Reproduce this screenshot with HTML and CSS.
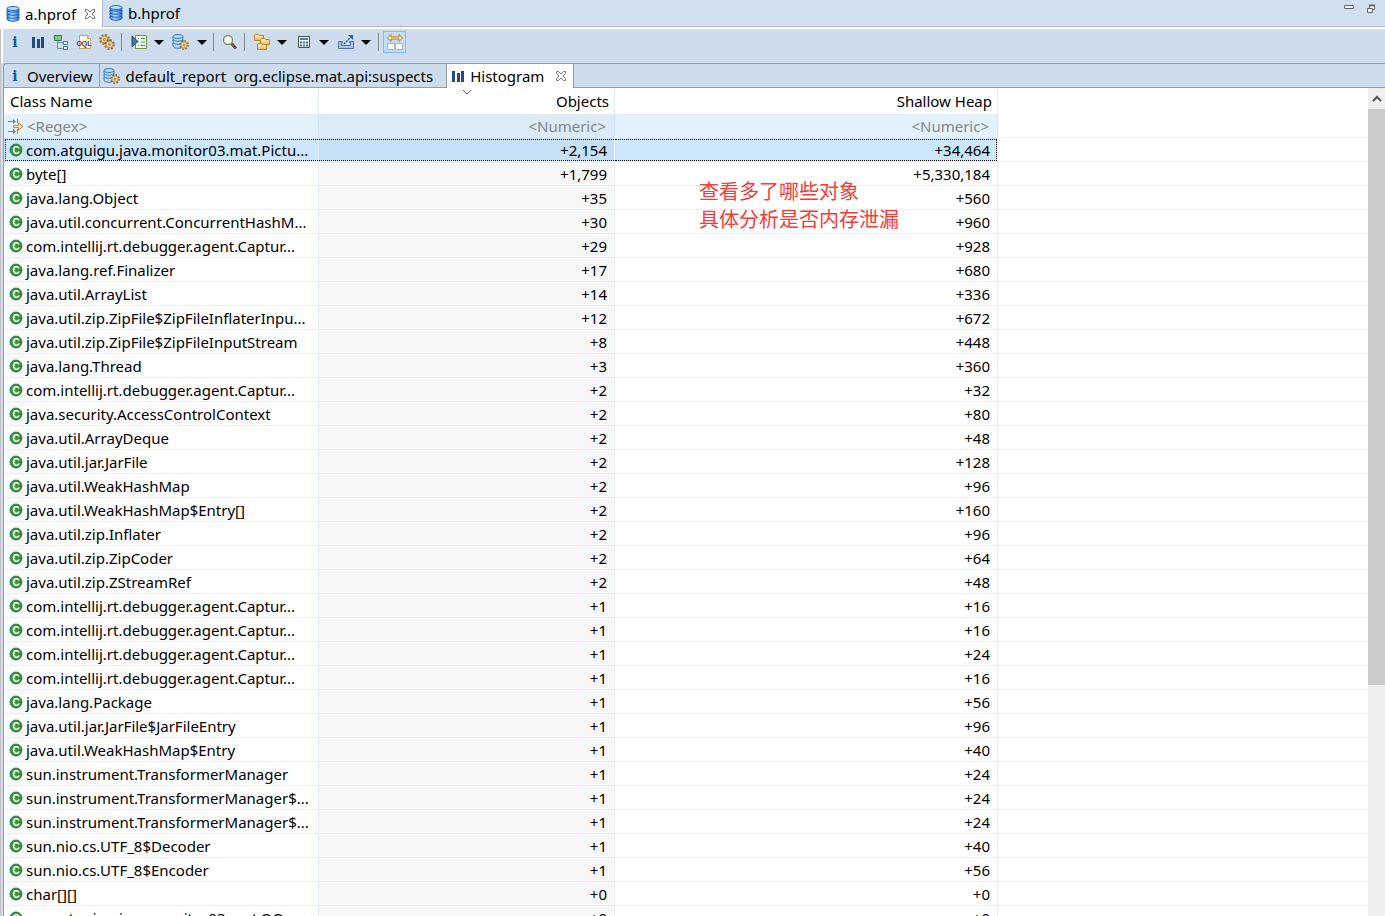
FILE: index.html
```html
<!DOCTYPE html>
<html lang="en">
<head>
<meta charset="utf-8">
<title>Memory Analyzer - Histogram</title>
<link rel="stylesheet" href="styles.css">
<script src="rows.js" defer></script>
</head>
<body>
<svg class="defs" aria-hidden="true">
  <defs>
    <linearGradient id="blue" x1="0" x2="1"><stop offset="0" stop-color="#3585d8"/><stop offset=".4" stop-color="#b4defc"/><stop offset="1" stop-color="#1f6fc8"/></linearGradient>
    <linearGradient id="gold" x1="0" x2="0" y1="0" y2="1"><stop offset="0" stop-color="#fff7cf"/><stop offset="1" stop-color="#e9b650"/></linearGradient>
    <symbol id="db" viewBox="0 0 16 16">
      <g fill="url(#blue)" stroke="#1f63bb"><path d="M2 11v2c0 3 12 3 12 0v-2z"/><path d="M2 8v2c0 3 12 3 12 0V8z"/><path d="M2 5v2c0 3 12 3 12 0V5z"/><path d="M2 3v1c0 3 12 3 12 0V3z"/><ellipse cx="8" cy="2.500" rx="6" ry="2" fill="#b9e1ff"/></g>
    </symbol>
    <symbol id="gear" viewBox="0 0 10 10"><circle cx="5" cy="5" r="4.200" fill="none" stroke="#94682f" stroke-width="1.500" stroke-dasharray="1.700 1.600"/><circle cx="5" cy="5" r="3.200" fill="#f5d994" stroke="#a8793a" stroke-width=".8"/><circle cx="5" cy="5" r="1" fill="#fff" stroke="#85561c" stroke-width=".7"/></symbol>
    <symbol id="dbgear" viewBox="0 0 18 16">
      <g fill="#b8ddf5" stroke="#3478b9"><path d="M1 9v3c0 3 10 3 10 0V9z"/><path d="M1 6v2c0 3 10 3 10 0V6z"/><path d="M1 3v2c0 3 10 3 10 0V3z"/><ellipse cx="6" cy="2.500" rx="5" ry="2"/></g><use href="#gear" x="7" y="6" width="10" height="10"/>
    </symbol>
    <symbol id="info" viewBox="0 0 16 16"><text class="info-letter" x="8" y="13" text-anchor="middle">i</text></symbol>
    <symbol id="bars" viewBox="0 0 16 16"><path fill="#244a7d" d="M2 3h3v11H2zM7 5h3v9H7zM11 3h3v11h-3z"/></symbol>
    <symbol id="close" viewBox="0 0 12 12"><path d="M1.500 1.500h2L6 4l2.500-2.500h2v2L8 6l2.500 2.500v2h-2L6 8l-2.500 2.500h-2v-2L4 6 1.500 3.500z" fill="#fff" stroke="#777"/></symbol>
    <symbol id="class" viewBox="0 0 14 14"><circle cx="7" cy="7" r="6" fill="#34943f" stroke="#287a45"/><text class="class-letter" x="7" y="10.500" text-anchor="middle">C</text></symbol>
    <symbol id="filter" viewBox="0 0 16 16"><path d="M0 3.500h5M0 13.500h5M9.500 1v4M9.500 11v5" stroke="#72828e" fill="none"/><path d="M5 1l3 2.500L5 6zM5 11l3 2.500L5 16z" fill="#72828e"/><path d="M5.500 7.500h5V5l4.500 3.500-4.500 3.500V9.500h-5z" fill="#ffe9a4" stroke="#c28a2b"/></symbol>
  </defs>
</svg>

<nav class="editor-tabs" aria-label="Open heap dumps">
  <button class="editor-tab active"><svg class="icon"><use href="#db"/></svg>a.hprof<svg class="close"><use href="#close"/></svg></button>
  <button class="editor-tab"><svg class="icon"><use href="#db"/></svg>b.hprof</button>
  <div class="window-tools">
    <button aria-label="Minimize"><svg width="10" height="12"><path d="M.5 5.500h9v3h-9z" fill="#fff" stroke="#666"/></svg></button>
    <button aria-label="Restore"><svg width="8" height="14"><path d="M2.500 5.500h5v4h-5z" fill="#fff" stroke="#666"/><path d="M2 5.500h6" stroke="#666" stroke-width="2"/><path d="M.5 8.500h5v4h-5z" fill="#fff" stroke="#666"/></svg></button>
  </div>
</nav>

<div class="editor">
  <div class="toolbar" role="toolbar" aria-label="Heap dump tools">
    <button aria-label="Overview"><svg class="icon"><use href="#info"/></svg></button>
    <button aria-label="Histogram"><svg class="icon"><use href="#bars"/></svg></button>
    <button aria-label="Dominator tree"><svg class="icon" viewBox="0 0 16 16"><path d="M4.500 6v8.500H10M4.500 8.500H10" fill="none" stroke="#728da7"/><path d="M1.500 1.500h7v5h-7z" fill="#86c88b" stroke="#347e47"/><path d="M10.500 7.500h4v3h-4zM10.500 12.500h4v3h-4z" fill="#e8f5ff" stroke="#3c739d"/></svg></button>
    <button aria-label="Object query language"><svg class="icon" viewBox="0 0 16 16"><path d="M3.500 1.500h8l3 3v10h-11z" fill="#fff8dc" stroke="#b9a779"/><path d="M11.500 1.500v3h3" fill="#e7c877" stroke="#b9a779"/><text class="oql-letters" x="8" y="12" text-anchor="middle">OQL</text></svg></button>
    <button aria-label="Thread overview"><svg class="icon" viewBox="0 0 16 16"><use href="#gear" x="0" y="0" width="11" height="11"/><use href="#gear" x="5" y="5" width="11" height="11"/></svg></button>
    <span class="separator"></span>
    <button class="menu" aria-label="Run expert system test"><svg class="icon" viewBox="0 0 16 16"><path d="M4.500 1.500h11v13h-11z" fill="#f5fbe8" stroke="#7d8e53"/><path d="M7 4.500h1M10 4.500h4M7 8h1M10 8h4M7 11.500h1M10 11.500h4" stroke="#3a985a"/><path d="M1 2v11l6-5.500z" fill="#3d799c" stroke="#274c70"/></svg><i class="arrow"></i></button>
    <button class="menu" aria-label="Query browser"><svg class="icon wide"><use href="#dbgear"/></svg><i class="arrow"></i></button>
    <span class="separator"></span>
    <button aria-label="Find object"><svg class="icon" viewBox="0 0 16 16"><path d="M9.500 9.500l4.500 5" stroke="#774945" stroke-width="3"/><circle cx="6" cy="6" r="4.500" fill="#f8fbe9" stroke="#8b8c7c" stroke-width="1.500"/></svg></button>
    <span class="separator"></span>
    <button class="menu" aria-label="Group result"><svg class="icon" viewBox="0 0 16 16"><g fill="url(#gold)" stroke="#b8832b"><path d="M.5 1.500l1-1h3l1 1h4v5h-9z"/><path d="M6.500 5.500l1-1h3l1 1h4v5h-9z"/><path d="M3.500 10.500l1-1h3l1 1h4v5h-9z"/></g></svg><i class="arrow"></i></button>
    <button class="menu" aria-label="Calculate retained size"><svg class="icon" viewBox="0 0 16 16"><path d="M2.500 2.500h11v11h-11z" fill="#eaf5fa" stroke="#554f40"/><path d="M4 4h8v2H4z" fill="#4789b4"/><path d="M4 8.500h8M4 11.500h8" stroke="#417599" stroke-width="2" stroke-dasharray="2 1"/></svg><i class="arrow"></i></button>
    <button class="menu" aria-label="Export"><svg class="icon" viewBox="0 0 16 16"><path d="M.5 7.500h4v1h-1v3h9v-3h-1v-1h4v7H.5z" fill="#adc5e9" stroke="#526fa9"/><path d="M6 10l7-7" stroke="#28679c" stroke-width="1.500" stroke-dasharray="2 1"/><path d="M10 1h5v5z" fill="#28679c"/></svg><i class="arrow"></i></button>
    <span class="separator"></span>
    <button class="pressed" aria-label="Compare to another heap dump" aria-pressed="true"><svg class="icon" viewBox="0 0 16 16"><path d="M.5 4L4 .5v2.500h8V.5L15.500 4 12 7.500V5H4v2.500z" fill="#fff1b2" stroke="#bd7819"/><path d="M.5 9.500h7v6h-7zM8.500 9.500h7v6h-7z" fill="#f6fcff" stroke="#b3ba9a"/></svg></button>
  </div>

  <nav class="view-tabs" aria-label="Views">
    <button class="view-tab"><svg class="icon"><use href="#info"/></svg>Overview</button>
    <button class="view-tab report"><svg class="icon wide"><use href="#dbgear"/></svg>default_report&nbsp; org.eclipse.mat.api:suspects</button>
    <button class="view-tab active"><svg class="icon"><use href="#bars"/></svg>Histogram<svg class="close"><use href="#close"/></svg></button>
  </nav>

  <main class="histogram">
    <div class="grid">
      <table>
        <colgroup><col class="col-name"><col class="col-objects"><col class="col-heap"><col></colgroup>
        <thead>
          <tr><th scope="col">Class Name</th><th scope="col" class="num sorted" aria-sort="descending">Objects<svg class="sort" viewBox="0 0 10 6"><path d="M1 1l4 4 4-4" fill="none" stroke="#666"/></svg></th><th scope="col" class="num">Shallow Heap</th><td class="rest"></td></tr>
          <tr class="filters">
            <td><label class="cell"><svg class="icon"><use href="#filter"/></svg><input type="text" placeholder="&lt;Regex&gt;" aria-label="Class name filter"></label></td>
            <td><input type="text" placeholder="&lt;Numeric&gt;" aria-label="Objects filter"></td>
            <td><input type="text" placeholder="&lt;Numeric&gt;" aria-label="Shallow heap filter"></td>
            <td class="rest"></td>
          </tr>
        </thead>
        <tbody id="rows"></tbody>
      </table>
      <p class="note" lang="zh">查看多了哪些对象<br>具体分析是否内存泄漏</p>
    </div>
    <div class="scrollbar"><button aria-label="Scroll up"><svg width="10" height="7"><path d="M1 6l4-4 4 4" fill="none" stroke="#555" stroke-width="2"/></svg></button><div class="thumb"></div></div>
  </main>
</div>
</body>
</html>
```
FILE: rows.js
```js
const agent = "com.intellij.rt.debugger.agent.Captur...";
const rows = [
  ["com.atguigu.java.monitor03.mat.Pictu...", "+2,154", "+34,464"],
  ["byte[]", "+1,799", "+5,330,184"],
  ["java.lang.Object", "+35", "+560"],
  ["java.util.concurrent.ConcurrentHashM...", "+30", "+960"],
  [agent, "+29", "+928"],
  ["java.lang.ref.Finalizer", "+17", "+680"],
  ["java.util.ArrayList", "+14", "+336"],
  ["java.util.zip.ZipFile$ZipFileInflaterInpu...", "+12", "+672"],
  ["java.util.zip.ZipFile$ZipFileInputStream", "+8", "+448"],
  ["java.lang.Thread", "+3", "+360"],
  [agent, "+2", "+32"],
  ["java.security.AccessControlContext", "+2", "+80"],
  ["java.util.ArrayDeque", "+2", "+48"],
  ["java.util.jar.JarFile", "+2", "+128"],
  ["java.util.WeakHashMap", "+2", "+96"],
  ["java.util.WeakHashMap$Entry[]", "+2", "+160"],
  ["java.util.zip.Inflater", "+2", "+96"],
  ["java.util.zip.ZipCoder", "+2", "+64"],
  ["java.util.zip.ZStreamRef", "+2", "+48"],
  [agent, "+1", "+16"],
  [agent, "+1", "+16"],
  [agent, "+1", "+24"],
  [agent, "+1", "+16"],
  ["java.lang.Package", "+1", "+56"],
  ["java.util.jar.JarFile$JarFileEntry", "+1", "+96"],
  ["java.util.WeakHashMap$Entry", "+1", "+40"],
  ["sun.instrument.TransformerManager", "+1", "+24"],
  ["sun.instrument.TransformerManager$...", "+1", "+24"],
  ["sun.instrument.TransformerManager$...", "+1", "+24"],
  ["sun.nio.cs.UTF_8$Decoder", "+1", "+40"],
  ["sun.nio.cs.UTF_8$Encoder", "+1", "+56"],
  ["char[][]", "+0", "+0"],
  ["com.atguigu.java.monitor03.mat.QQ", "+0", "+0"]
];

document.getElementById("rows").innerHTML = rows.map(([name, objects, heap], i) => `
  <tr${i === 0 ? ' class="selected"' : ""}>
    <td><div class="cell"><svg class="class-icon"><use href="#class"/></svg><span>${name}</span></div></td>
    <td class="num">${objects}</td>
    <td class="num">${heap}</td>
    <td class="rest"></td>
  </tr>`).join("");
```
FILE: styles.css
```css
* { box-sizing: border-box; }

body {
  margin: 0;
  height: 100vh;
  overflow: hidden;
  display: flex;
  flex-direction: column;
  background: #cddded;
  color: #000;
  font: 15px/24px "Noto Sans", "Noto Sans CJK SC", sans-serif;
}

button {
  margin: 0;
  padding: 0;
  border: 0;
  background: none;
  color: inherit;
  font: inherit;
  white-space: nowrap;
}

.defs { position: absolute; width: 0; height: 0; }
.icon { width: 16px; height: 16px; flex: none; display: block; }
.wide { width: 18px; }
.close { width: 12px; height: 12px; flex: none; }
.info-letter { font: bold 14px "DejaVu Serif", serif; fill: #155a94; }
.class-letter { font: bold 10px "Liberation Sans", sans-serif; fill: #fff; }
.oql-letters { font: bold 7px "Liberation Sans", sans-serif; fill: #45406e; }

.editor-tabs {
  display: flex;
  flex: none;
  height: 27px;
  background: #d0e0ef;
  border-bottom: 1px solid #b4b7d0;
}
.editor-tab {
  display: flex;
  align-items: center;
  gap: 4px;
  padding: 0 6px 0 5px;
}
.editor-tab.active {
  background: #fff;
  border-right: 1px solid #b4b7d0;
  margin-bottom: -1px;
}
.editor-tab .close { margin-left: 4px; }
.window-tools {
  display: flex;
  align-items: flex-start;
  gap: 13px;
  margin-left: auto;
  padding-right: 10px;
}
.window-tools svg { display: block; }

.editor {
  flex: 1;
  min-height: 0;
  display: flex;
  flex-direction: column;
  margin-top: 2px;
  border-left: 1px solid #c4c4c4;
  box-shadow: 0 -2px #fff;
}

.toolbar {
  display: flex;
  align-items: center;
  flex: none;
  height: 34px;
  padding-bottom: 8px;
  border-left: 2px solid #fff;
}
.toolbar button {
  display: flex;
  align-items: center;
  justify-content: center;
  width: 23px;
  height: 22px;
}
.toolbar .menu { width: 42px; gap: 7px; }
.arrow {
  border: 5px solid transparent;
  border-top-color: #000;
  border-bottom: 0;
}
.separator { width: 1px; height: 18px; margin: 0 3px; background: #85898d; }
.toolbar .separator + button { margin-left: 1px; }
.toolbar .pressed { background: #c0def8; border: 1px solid #7dbdf2; }

.view-tabs {
  display: flex;
  flex: none;
  height: 25px;
  margin-left: 2px;
  border: 1px solid #999da3;
  border-right: 0;
  border-radius: 3px 0 0 0;
}
.view-tab {
  display: flex;
  align-items: center;
  gap: 4px;
  padding: 0 7px 0 3px;
  border-right: 1px solid #999da3;
}
.view-tab.report { padding-right: 13px; }
.view-tab.active { background: #fff; margin-bottom: -1px; padding: 0 6px 0 3px; }
.view-tab .close { margin-left: 7px; }

.histogram {
  flex: 1;
  min-height: 0;
  display: flex;
  margin-left: 2px;
  border-left: 1px solid #999da3;
  background: #fff;
}
.grid { position: relative; flex: 1; min-width: 0; overflow: hidden; }

table { width: 100%; table-layout: fixed; border-collapse: separate; border-spacing: 0; }
.col-name { width: 315px; }
.col-objects { width: 296px; }
.col-heap { width: 383px; }

th, td {
  height: 24px;
  padding: 0 7px 0 4px;
  border-right: 1px solid #e8eef6;
  border-bottom: 1px solid #eee;
  line-height: 23px;
  white-space: nowrap;
  overflow: hidden;
}
th { height: 26px; padding: 0 5px 0 6px; font-weight: 400; text-align: left; border-bottom: 0; }
td.rest { border-right: 0; }
thead tr:first-child td { border-bottom: 0; }
.num { text-align: right; }
tbody .num, .cell span { padding-top: 2px; line-height: 21px; }
.sorted { position: relative; }
.sort { position: absolute; left: 143px; top: 1px; width: 10px; height: 6px; }
tbody td:nth-child(2) { background: #f7f7f7; }

.cell { display: flex; align-items: center; gap: 3px; height: 23px; padding-left: 1px; }
.class-icon { width: 14px; height: 14px; flex: none; }
.cell .icon { margin-left: -1px; }

.filters td { background: #e4f2ff; border-color: #e4f2ff; border-right-color: #cfe4f8; }
.filters td:nth-child(2) { background: #ddebf7; border-bottom-color: #ddebf7; }
.filters td.rest { background: #fff; border-bottom-color: #eee; }
input {
  display: block;
  width: 100%;
  min-width: 0;
  height: 23px;
  padding: 2px 0 0;
  border: 0;
  background: none;
  font: inherit;
}
input::placeholder { color: #858585; opacity: 1; }
.filters td > input { text-align: right; padding-right: 1px; }

.selected td { position: relative; background: #cce7ff; }
.selected td:nth-child(2) { background: #c6e0f7; }
.selected td.rest { background: #fff; }
.selected td:not(.rest)::before {
  content: "";
  position: absolute;
  inset: 1px 0 0;
  border: 1px dotted #000;
  border-width: 1px 0;
}
.selected td:first-child::before { left: 1px; border-left-width: 1px; }
.selected td:nth-child(3)::before { border-right-width: 1px; }

.note {
  position: absolute;
  left: 695px;
  top: 89px;
  margin: 0;
  color: #f83a3a;
  font: 20px/28px "Noto Sans CJK SC", sans-serif;
}

.scrollbar { flex: none; width: 17px; display: flex; flex-direction: column; background: #efefef; }
.scrollbar button { display: flex; align-items: center; justify-content: center; height: 21px; }
.thumb { height: 71.500%; max-height: 576px; background: #cbcbcb; }
```
